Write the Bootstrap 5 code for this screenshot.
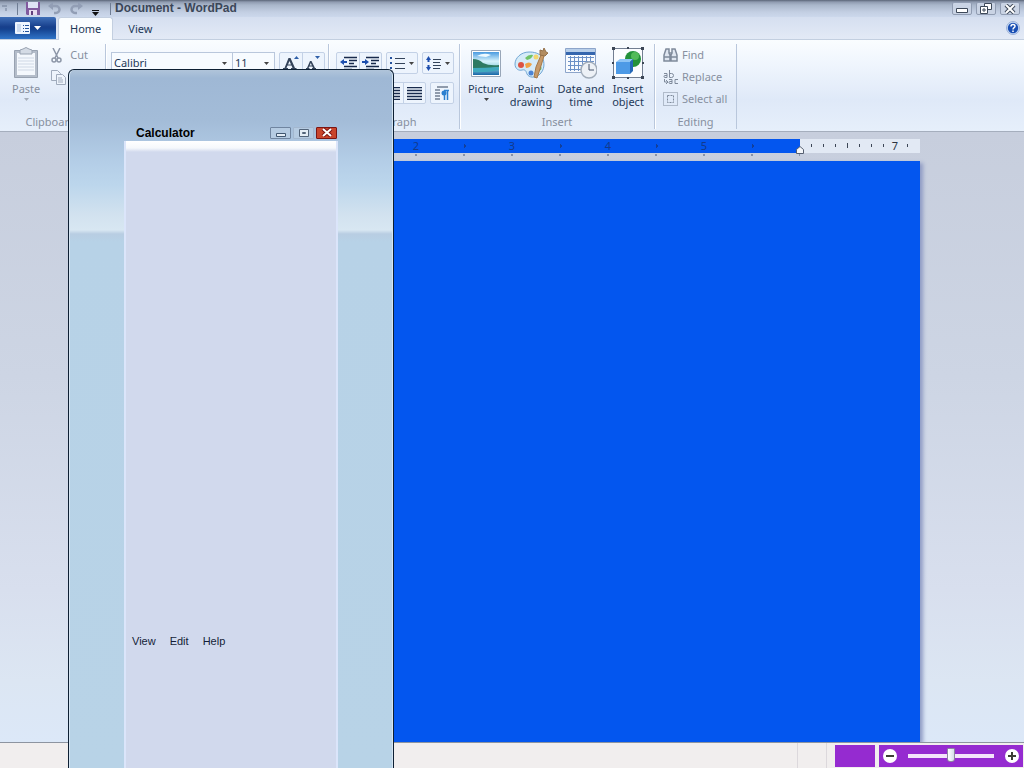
<!DOCTYPE html>
<html lang="en">
<head>
<meta charset="utf-8">
<meta name="viewport" content="width=device-width, initial-scale=1">
<title>Document - WordPad</title>
<link href="https://cdn.jsdelivr.net/npm/bootstrap@5.3.0/dist/css/bootstrap.min.css" rel="stylesheet">
<style>
  :root { --ink: #1e3958; --muted: #8790a0; --line: #b9c7dc; }
  body { font: 11px/14px "Noto Sans", "Open Sans", sans-serif; color: var(--ink); background: #c8cfdd; }
  button, select { font: inherit; color: inherit; padding: 0; border: 0; background: none; }
  svg { display: block; flex: none; }
  button:disabled { color: var(--muted); }

  .title-bar { height: 17px; background: linear-gradient(#5a6577 0, #8f9bb0 2px, #a9b6ca 5px, #c3cfe3 12px, #ccd8ec); }
  .title-bar h1 { font: bold 12px/16px "Liberation Sans", Arial, sans-serif; color: #3b4658; margin: 0 0 2px; }
  .quick-tools { width: 110px; padding-left: 2px; }
  .quick-divider { width: 1px; height: 12px; background: #6f7d94; }
  .win-button { width: 20px; height: 13px; border: 1px solid #909cb2; border-radius: 2px; background: #c9d3e4; }

  .tab-bar { height: 23px; background: linear-gradient(#d5dff0, #e3eaf6); border-bottom: 1px solid #c3cfe0; }
  .file-button { width: 56px; height: 22px; background: linear-gradient(#3f6fb8, #173f8c 45%, #15428f 55%, #2f74c8); border-radius: 0 2px 0 0; }
  .ribbon-tab { height: 23px; line-height: 24px; color: var(--ink); text-decoration: none; }
  .ribbon-tab.current { margin-left: 2px; background: #fafdff; border: 1px solid #c3cfe0; border-bottom: 0; border-radius: 3px 3px 0 0; padding: 0 11px; line-height: 22px; }
  .ribbon-tab.other { padding: 0 15px; }

  .ribbon { height: 92px; background: linear-gradient(#fafdff 0, #eff5fd 25px, #dfe9f8 60px, #e6effb); border-bottom: 1px solid #a5aebd; }
  .ribbon-group { border-right: 1px solid var(--line); margin: 4px 0 2px; }
  .ribbon-group:not(:first-child) { box-shadow: inset 1px 0 #fff; }
  .group-caption { color: var(--muted); text-align: center; line-height: 14px; }
  .g-clip { width: 106px; }
  .g-font { width: 223px; padding-left: 5px; }
  .g-para { width: 131px; padding-left: 7px; }
  .g-insert { width: 195px; padding-left: 4px; }
  .g-edit { width: 82px; padding-left: 8px; }
  .big-button { display: flex; flex-direction: column; align-items: center; line-height: 13px; padding-top: 3px; gap: 3px; white-space: nowrap; }
  .paste-button { padding-left: 12px; padding-right: 11px; }
  .edit-button { display: flex; align-items: center; gap: 4px; height: 22px; white-space: nowrap; }
  .combo { height: 22px; border: 1px solid var(--line); background: #f7fbff url("data:image/svg+xml,%3Csvg xmlns='http://www.w3.org/2000/svg' width='5' height='3'%3E%3Cpath d='M0 0h5L2.500 3z' fill='%23444'/%3E%3C/svg%3E") no-repeat right 5px center; appearance: none; padding-left: 2px; border-radius: 0; }
  .tool-set { display: flex; height: 22px; border: 1px solid #c3d1e6; border-radius: 2px; background: #edf4fd; }
  .tool-set button { width: 22px; display: flex; align-items: center; justify-content: center; gap: 4px; }
  .tool-set button + button { border-left: 1px solid #c3d1e6; }
  .tool-set .wide { width: 30px; }
  .tool-row { padding-top: 8px; }
  .glyph { font: 15px/18px "Liberation Serif", serif; color: #2c3a50; }
  .glyph.big { font-size: 18px; }

  .workspace { background: linear-gradient(#c7cedd, #cdd5e4 40%, #d8dfee 75%, #dce6f3 90%, #dce8f8); padding-top: 7px; }
  .paper-column { width: 816px; max-width: 100%; }
  .ruler { height: 14px; background: #e2e9f4; }
  .ruler-text { background: radial-gradient(circle at 0 7px, #123f9a 2px, transparent 2px) 0 0 / 96px 14px #0356ef; padding: 0 48px; background-origin: content-box; color: #123a8c; line-height: 14px; }
  .ruler-text span { width: 96px; text-align: center; }
  .ruler-margin { width: 120px; }
  .half-ticks { height: 8px; background: radial-gradient(circle at 24px 2px, #8792a8 1px, transparent 1px) 24px 0 / 48px 4px repeat-x; margin: 0 120px; }
  .paper { background: #0356ef; box-shadow: 3px 2px 4px #8f9bc4; resize: none; }

  .status-bar { height: 26px; background: #f1eeee; border-top: 1px solid #8d94a0; padding-right: 1px; }
  .status-cell { width: 30px; border: 1px solid #dcd8dc; border-width: 0 1px; margin-right: 8px; }
  .zoom-level { width: 40px; height: 22px; background: #952bd0; }
  .zoom-panel { width: 144px; height: 22px; background: #952bd0; }
  .zoom-panel button { width: 14px; height: 14px; border-radius: 50%; background: #fff; display: grid; place-items: center; }
  .zoom-track { appearance: none; width: 86px; height: 16px; background: none; margin: 0; }
  .zoom-track::-webkit-slider-runnable-track { height: 4px; background: #f4e4fb; }
  .zoom-track::-webkit-slider-thumb { appearance: none; width: 8px; height: 14px; margin-top: -6px; background: linear-gradient(90deg, #fff, #d5dfe8); border: 1px solid #8c86a0; border-radius: 1px 1px 3px 3px; }

  /* The calculator floats over the editor window */
  .calc-window { position: absolute; left: 68px; top: 69px; bottom: 0; width: 326px; padding: 54px 55px 0; border: 1px solid #0d1f33; border-bottom: 0; border-radius: 6px 6px 0 0;
    background: linear-gradient(#b0c4da 0, #9fb8d5 8px, #a3bcd8 50px, #b5cfe8 95px, #bcd6ec 115px, #d2e2ef 145px, #d8e7f2 160px, #b8cde2 164px, #b7d2e7 172px, #b8d3e7); box-shadow: inset 1px 0 #d5e5f2, inset -1px 0 #d5e5f2; }
  .calc-title { height: 17px; padding: 0 1px 0 12px; }
  .calc-title h2 { font: bold 12px/16px "Liberation Sans", Arial, sans-serif; color: #000; }
  .calc-buttons { gap: 2px; }
  .calc-title button { width: 21px; height: 12px; border: 1px solid #7085a0; border-radius: 1px; display: flex; align-items: center; justify-content: center; background: #b5cbe2; }
  .calc-title button:disabled { border-color: #a3b7cf; }
  .calc-title .calc-close { background: #c9452c; border-color: #7c1513; }
  .calc-body { background: linear-gradient(#fff 0, #f5f8fc 7px, #d1d9ed 11px); border: 1px solid #dbe5fa; border-width: 0 2px; padding-bottom: 118px; }
  .calc-menu { gap: 14px; padding-left: 6px; font: 11px/18px "Liberation Sans", Arial, sans-serif; }
  .calc-menu a { color: #141d38; text-decoration: none; }
</style>
</head>
<body class="vh-100 d-flex flex-column overflow-hidden position-relative">

<header>
  <div class="title-bar d-flex align-items-center">
    <div class="quick-tools d-flex align-items-center gap-2">
      <svg width="7" height="8" viewBox="0 0 7 8" fill="none" stroke="#6f7d94"><path d="M0 1h5M4 3v3" /></svg>
      <span class="quick-divider"></span>
      <button aria-label="Save"><svg width="14" height="13" viewBox="0 0 14 13"><path d="M0 0h14v13H1l-1-1z" fill="#815a9e"/><path d="M2 0h10v6H2z" fill="#dfe2f5"/><path d="M3 8h8v5H3z" fill="#e8dcef"/><path d="M5 9h2v4H5z" fill="#62407d"/></svg></button>
      <button aria-label="Undo"><svg width="14" height="13" viewBox="0 0 14 13" fill="none" stroke="#929eb5" stroke-width="2.500"><path d="M3 4h5a3.500 3.500 0 0 1 0 7H6"/><path d="M5 0L0 4l5 4z" fill="#929eb5" stroke="none"/></svg></button>
      <button aria-label="Redo"><svg width="14" height="13" viewBox="0 0 14 13" fill="none" stroke="#929eb5" stroke-width="2.500"><path d="M10 4H5a3.500 3.500 0 0 0 0 7h2"/><path d="M8 0l5 4-5 4z" fill="#929eb5" stroke="none"/></svg></button>
      <button aria-label="Customize toolbar" class="pt-2"><svg width="7" height="6" viewBox="0 0 7 6" fill="#111"><path d="M0 0h7v1H0zM0 2h7L3.500 6z"/></svg></button>
    </div>
    <span class="quick-divider me-1"></span>
    <h1>Document - WordPad</h1>
    <div class="d-flex ms-auto gap-1 pe-1">
      <button class="win-button d-flex align-items-center justify-content-center" aria-label="Minimize"><svg width="12" height="9" viewBox="0 0 12 9"><path d="M.5 4.500h11v4H.5z" fill="#fff" stroke="#3d4859"/></svg></button>
      <button class="win-button d-flex align-items-center justify-content-center" aria-label="Restore"><svg width="12" height="11" viewBox="0 0 12 11" fill="#fff" stroke="#3d4859"><path d="M4.500.5h7v6h-7z"/><path d="M.5 3.500h7v7h-7z"/><path d="M3 6h2v2H3z"/></svg></button>
      <button class="win-button d-flex align-items-center justify-content-center" aria-label="Close"><svg width="12" height="10" viewBox="0 0 12 10"><path d="M2 1l8 8M10 1L2 9" stroke="#3d4859" stroke-width="4"/><path d="M2 1l8 8M10 1L2 9" stroke="#fff" stroke-width="2"/></svg></button>
    </div>
  </div>

  <nav class="tab-bar d-flex" aria-label="Ribbon tabs">
    <button class="file-button d-flex align-items-center justify-content-center gap-1" aria-label="WordPad menu">
      <svg width="15" height="12" viewBox="0 0 15 12"><rect width="15" height="12" rx="1" fill="#eef5ff"/><path d="M2 3h4M2 5h4M2 7h4M2 9h4" stroke="#a9c0e0"/><path d="M8 3.500h1M10 3.500h4M8 6.500h1M10 6.500h4M8 9.500h1M10 9.500h4" stroke="#24539c"/></svg>
      <svg width="7" height="5" viewBox="0 0 7 5"><path d="M0 0h7L3.500 4z" fill="#fff"/></svg>
    </button>
    <a href="#home" class="ribbon-tab current">Home</a>
    <a href="#view" class="ribbon-tab other">View</a>
    <button class="ms-auto me-1" aria-label="Help"><svg width="14" height="14" viewBox="0 0 14 14"><circle cx="7" cy="7" r="6.500" fill="#c8daf4" stroke="#9db1d8"/><circle cx="7" cy="7" r="5.200" fill="#1a4fb4"/><path d="M5 5.500C5 3 9 3 9 5.200 9 6.800 7 6.600 7 8.500M7 9.500v1.500" fill="none" stroke="#fff" stroke-width="1.500"/></svg></button>
  </nav>

  <div class="ribbon d-flex">
    <section class="ribbon-group g-clip d-flex flex-column justify-content-between">
      <div class="d-flex">
        <button class="big-button paste-button" disabled>
          <svg width="26" height="32" viewBox="0 0 26 32"><path d="M1.500 3.500h23v27h-23z" fill="#b4bdca" stroke="#98a2b1"/><path d="M4 6h18v22H4z" fill="#f4f8fd"/><path d="M5 11h16M5 14h16M5 17h16M5 20h16M5 23h16" stroke="#cfd8e5"/><path d="M7 3l3-1q3-3 6 0l3 1v4H7z" fill="#d4dbe5" stroke="#98a2b1"/></svg>
          <span>Paste</span>
          <svg width="5" height="3" viewBox="0 0 5 3"><path d="M0 0h5L2.500 3z" fill="#a5adba"/></svg>
        </button>
        <div>
          <button class="edit-button gap-2" disabled>
            <svg width="11" height="15" viewBox="0 0 11 15" fill="none" stroke="#8d97a8" stroke-width="1.500"><path d="M2 0l5 10M9 0L4 10"/><circle cx="3" cy="12" r="2"/><circle cx="8" cy="12" r="2"/></svg>Cut</button>
          <button class="edit-button" disabled aria-label="Copy">
            <svg width="15" height="15" viewBox="0 0 15 15" fill="#eef4fc" stroke="#a0abbc"><path d="M.5.5h6l3 3v7h-9z"/><path d="M5.500 4.500h6l3 3v7h-9zM7 8h4M7 10h5M7 12h5"/></svg></button>
        </div>
      </div>
      <div class="group-caption pe-1">Clipboard</div>
    </section>

    <section class="ribbon-group g-font">
      <div class="d-flex tool-row">
        <select class="combo" style="width:122px" aria-label="Font family"><option>Calibri</option></select>
        <select class="combo border-start-0" style="width:42px" aria-label="Font size"><option>11</option></select>
        <div class="tool-set ms-1">
          <button aria-label="Grow font"><svg width="17" height="14" viewBox="0 0 17 14"><path d="M5.500 2h2L12 12h1.500v1H8v-1h1.500L8.500 9.500h-4L3.500 12H5v1H0v-1h1.500zM5 8.500h3L6.500 5z" fill="#33435a"/><path d="M11 3l2.500-3L16 3z" fill="#2e5fa8"/></svg></button>
          <button aria-label="Shrink font"><svg width="17" height="14" viewBox="0 0 17 14"><path d="M5 5h1.500L10 12h1v1H7v-1h1L7.300 10.500h-3L3.500 12h1v1H1v-1h1zM4.700 9.500h2.200L5.800 7z" fill="#33435a"/><path d="M10 0h5l-2.500 3z" fill="#2e5fa8"/></svg></button>
        </div>
      </div>
    </section>

    <section class="ribbon-group g-para d-flex flex-column">
      <div class="d-flex gap-1 tool-row">
        <div class="tool-set">
          <button aria-label="Decrease indent"><svg width="17" height="14" viewBox="0 0 17 14"><path d="M4 1.500h13M9 4.500h8M9 7.500h5M4 10.500h13M4 13.500h8" stroke="#182a4c" stroke-width="1.500"/><path d="M0 6l4-3v2h3v2H4v2z" fill="#1e4fae"/></svg></button>
          <button aria-label="Increase indent"><svg width="17" height="14" viewBox="0 0 17 14"><path d="M4 1.500h13M9 4.500h8M9 7.500h5M4 10.500h13M4 13.500h8" stroke="#182a4c" stroke-width="1.500"/><path d="M7 6L3 3v2H0v2h3v2z" fill="#1e4fae"/></svg></button>
        </div>
        <div class="tool-set"><button class="wide" aria-label="Bullets"><svg width="15" height="13" viewBox="0 0 15 13"><path d="M0 0h2v2H0zM0 5h2v2H0zM0 10h2v2H0z" fill="#24519d"/><path d="M5 1.500h10M5 6.500h10M5 11.500h10" stroke="#33435a"/></svg><svg width="5" height="3" viewBox="0 0 5 3"><path d="M0 0h5L2.500 3z" fill="#444"/></svg></button></div>
        <div class="tool-set"><button class="wide" aria-label="Line spacing"><svg width="15" height="15" viewBox="0 0 15 15"><path d="M2.500 0L5 4H3.500v2h-2V4H0zM2.500 15L0 11h1.500V9h2v2H5z" fill="#1e4fae"/><path d="M7 3.500h8M7 6.500h7M7 9.500h8M7 12.500h7" stroke="#33435a"/></svg><svg width="5" height="3" viewBox="0 0 5 3"><path d="M0 0h5L2.500 3z" fill="#444"/></svg></button></div>
      </div>
      <div class="d-flex gap-1 tool-row">
        <div class="tool-set">
          <button aria-label="Align left"><svg width="14" height="12" viewBox="0 0 14 12"><path d="M0 .5h14M0 3.500h9M0 6.500h14M0 9.500h9" stroke="#182a4c"/></svg></button>
          <button aria-label="Center"><svg width="14" height="12" viewBox="0 0 14 12"><path d="M0 .5h14M3 3.500h8M0 6.500h14M3 9.500h8" stroke="#182a4c"/></svg></button>
          <button aria-label="Align right"><svg width="15" height="13" viewBox="0 0 15 13"><path d="M0 .5h15M4 3.500h11M0 6.500h15M4 9.500h11M0 12.500h15" stroke="#182a4c" stroke-width="1.500"/></svg></button>
          <button aria-label="Justify"><svg width="15" height="13" viewBox="0 0 15 13"><path d="M0 .5h15M0 3.500h15M0 6.500h15M0 9.500h15M0 12.500h15" stroke="#182a4c" stroke-width="1.500"/></svg></button>
        </div>
        <div class="tool-set"><button aria-label="Paragraph"><svg width="14" height="14" viewBox="0 0 14 14"><path d="M2 1h11M0 4h5M0 7h5M0 10h5M0 13h5" stroke="#33435a"/><path d="M9.500 14V5M12.500 14V4.500M14 4.500H9" stroke="#2b80d0" stroke-width="1.500"/><circle cx="9" cy="7" r="2.500" fill="#2b80d0"/></svg></button></div>
      </div>
      <div class="group-caption mt-auto pe-3">Paragraph</div>
    </section>

    <section class="ribbon-group g-insert d-flex flex-column justify-content-between">
      <div class="d-flex">
        <button class="big-button" style="width:44px">
          <svg width="32" height="32" viewBox="0 0 32 32"><defs><linearGradient id="sky" x2="0" y2="1"><stop stop-color="#4a9be0"/><stop offset=".4" stop-color="#d5f2fb"/><stop offset=".6" stop-color="#a5dbe6"/><stop offset="1" stop-color="#1767a8"/></linearGradient></defs><path d="M1.500 3.500h29v26h-29z" fill="#fff" stroke="#98a6b8"/><path d="M3 5h26v23H3z" fill="url(#sky)"/><path d="M3 12q6 0 10 4 6 3 16 2v2q-12 2-26 1z" fill="#2d7a62"/><path d="M7 9q7-4 14-1l-5 2z" fill="#eefaff"/><path d="M3 21q12 0 26-1v3q-14 3-26 2z" fill="#3faabf"/></svg>
          <span>Picture</span>
          <svg width="5" height="3" viewBox="0 0 5 3"><path d="M0 0h5L2.500 3z" fill="#444"/></svg>
        </button>
        <button class="big-button" style="width:46px">
          <svg width="34" height="32" viewBox="0 0 34 32"><path d="M15 5C7 5 1 11 1 17c0 5 4 7 7 6 4-1 4 2 5 4 2 4 8 4 12 1 6-5 6-13 3-18-3-4-8-5-13-5z" fill="#d5ebf8" stroke="#6fa5d4"/><path d="M11 11q4-4 8-3-1 4-6 5z" fill="#70c267"/><circle cx="7" cy="18" r="3" fill="#dc5343"/><circle cx="22" cy="10" r="2.500" fill="#f3d66e"/><path d="M11 17q4-3 7 0-2 4-6 4z" fill="#f0a345"/><circle cx="17" cy="26" r="2.500" fill="#4c83d4"/><circle cx="25" cy="21" r="2.500" fill="#62b86f"/><path d="M20 30l2-10 5-12 3 1-4 13-3 9z" fill="#c79a69" stroke="#a67847"/><path d="M26 3l3 1 1-3 2 4 2 1-3 3-5-1z" fill="#b28c60" stroke="#957149"/></svg>
          <span>Paint<br>drawing</span></button>
        <button class="big-button" style="width:54px">
          <svg width="32" height="32" viewBox="0 0 32 32"><path d="M.5 1.500h30v24H.5z" fill="#f8fbff" stroke="#8da5ca"/><path d="M1 2h29v6H1z" fill="#3566ae"/><path d="M1 2h29v3H1z" fill="#b8cfea"/><path d="M3 10.500h26M3 14.500h26M3 18.500h18M3 22.500h15M5.500 9v15M9.500 9v15M13.500 9v15M17.500 9v13M21.500 9v8M25.500 9v6" stroke="#6c91c7"/><circle cx="24" cy="23" r="8" fill="#edf1f6" stroke="#a1acb9" stroke-width="1.500"/><path d="M24 17v6h5" fill="none" stroke="#46556c"/></svg>
          <span>Date and<br>time</span></button>
        <button class="big-button" style="width:40px">
          <svg width="32" height="32" viewBox="0 0 32 32"><path d="M1.500 1.500h29v29h-29z" fill="#fbfdff" stroke="#727e91"/><circle cx="21" cy="12" r="8" fill="#23913a"/><circle cx="23" cy="9" r="4" fill="#52bb59"/><path d="M4 15l4-3h13l-3 3z" fill="#8dc4f5"/><path d="M4 15h14v12H4z" fill="#4d9ae6"/><path d="M18 15l3-3v12l-3 3z" fill="#2468b8"/><path d="M0 0h3v3H0zM29 0h3v3h-3zM0 29h3v3H0zM29 29h3v3h-3zM0 15h2v2H0zM30 15h2v2h-2zM15 0h2v2h-2zM15 30h2v2h-2z" fill="#3c4655"/></svg>
          <span>Insert<br>object</span></button>
      </div>
      <div class="group-caption pe-1">Insert</div>
    </section>

    <section class="ribbon-group g-edit d-flex flex-column justify-content-between">
      <div>
        <button class="edit-button" disabled><svg width="15" height="14" viewBox="0 0 15 14" fill="#dfe6f0" stroke="#7f8a9b" stroke-width="1.500"><path d="M3 1h3v4l1 2v6H1V7zM9 1h3l2 6v6H8V7l1-2z"/><path d="M1 9h6M8 9h6M6 5h3"/></svg>Find</button>
        <button class="edit-button" disabled><svg width="15" height="15" viewBox="0 0 15 15" fill="none" stroke="#7f8a9b"><path d="M1 3.500h3v4H2a1 1 0 0 1 0-2h2M6.500 0v7.500h2a2 2 0 0 0 0-4h-2M6 9.500h3v4H7a1 1 0 0 1 0-2h2M15 9.500h-3v4h3"/><path d="M1.500 9v3h3M3 10l2 2-2 2"/></svg>Replace</button>
        <button class="edit-button" disabled><svg width="15" height="14" viewBox="0 0 15 14" fill="none" stroke="#7f8a9b"><path d="M.5.5h14v13H.5z" stroke-dasharray="1 1"/><path d="M4.500 3.500h6v7h-6z" stroke-dasharray="2 1"/></svg>Select all</button>
      </div>
      <div class="group-caption pe-2">Editing</div>
    </section>
  </div>
</header>

<main class="workspace flex-grow-1 d-flex flex-column align-items-center overflow-hidden">
  <div class="paper-column d-flex flex-column flex-grow-1">
    <div class="ruler d-flex">
      <div class="ruler-margin"></div>
      <div class="ruler-text d-flex flex-grow-1">
        <span>1</span><span>2</span><span>3</span><span>4</span><span>5</span>
      </div>
      <svg class="ruler-margin" height="14" viewBox="0 0 120 14" overflow="visible">
        <path d="M11.500 5v3M23.500 5v3M35.500 5v3M47.500 4v5M59.500 5v3M71.500 5v3M83.500 5v3M107.500 5v3" stroke="#3c4656"/>
        <text x="95" y="11" font-size="11" text-anchor="middle" fill="#2b3442">7</text>
        <path d="M-3.500 14.500v-4l3.500-3 3.500 3v4z" fill="#f4f6fa" stroke="#555f70"/>
      </svg>
    </div>
    <div class="half-ticks"></div>
    <textarea class="paper flex-grow-1 border-0 w-100" aria-label="Document text"></textarea>
  </div>
</main>

<footer class="status-bar d-flex align-items-center justify-content-end">
  <div class="status-cell h-100"></div>
  <div class="zoom-level me-1"></div>
  <div class="zoom-panel d-flex align-items-center justify-content-between px-1">
    <button aria-label="Zoom out"><svg width="8" height="8" viewBox="0 0 8 8"><path d="M0 4h8" stroke="#3c3f35" stroke-width="2"/></svg></button>
    <input class="zoom-track" type="range" min="0" max="100" value="50" aria-label="Zoom">
    <button aria-label="Zoom in"><svg width="8" height="8" viewBox="0 0 8 8"><path d="M0 4h8M4 0v8" stroke="#3c3f35" stroke-width="2"/></svg></button>
  </div>
</footer>

<section class="calc-window d-flex flex-column" aria-label="Calculator">
  <div class="calc-title d-flex align-items-center">
    <h2 class="m-0 me-auto">Calculator</h2>
    <div class="calc-buttons d-flex">
      <button aria-label="Minimize"><svg width="10" height="8" viewBox="0 0 10 8"><path d="M.5 4.500h9v3h-9z" fill="#e4edf6" stroke="#40566f"/></svg></button>
      <button disabled aria-label="Maximize"><svg width="10" height="8" viewBox="0 0 10 8" fill="#e4edf6" stroke="#52647a"><path d="M.5.5h9v7h-9z"/><path d="M3.500 3.500h3v1h-3z"/></svg></button>
      <button class="calc-close" aria-label="Close"><svg width="12" height="9" viewBox="0 0 12 9"><path d="M2 1l8 7M10 1L2 8" stroke="#7c1513" stroke-width="4"/><path d="M2 1l8 7M10 1L2 8" stroke="#fff" stroke-width="2"/></svg></button>
    </div>
  </div>
  <div class="calc-body flex-grow-1 d-flex flex-column justify-content-end">
    <nav class="calc-menu d-flex" aria-label="Calculator menu">
      <a href="#calc-view">View</a><a href="#calc-edit">Edit</a><a href="#calc-help">Help</a>
    </nav>
  </div>
</section>

<script src="https://cdn.jsdelivr.net/npm/bootstrap@5.3.0/dist/js/bootstrap.bundle.min.js"></script>
</body>
</html>
